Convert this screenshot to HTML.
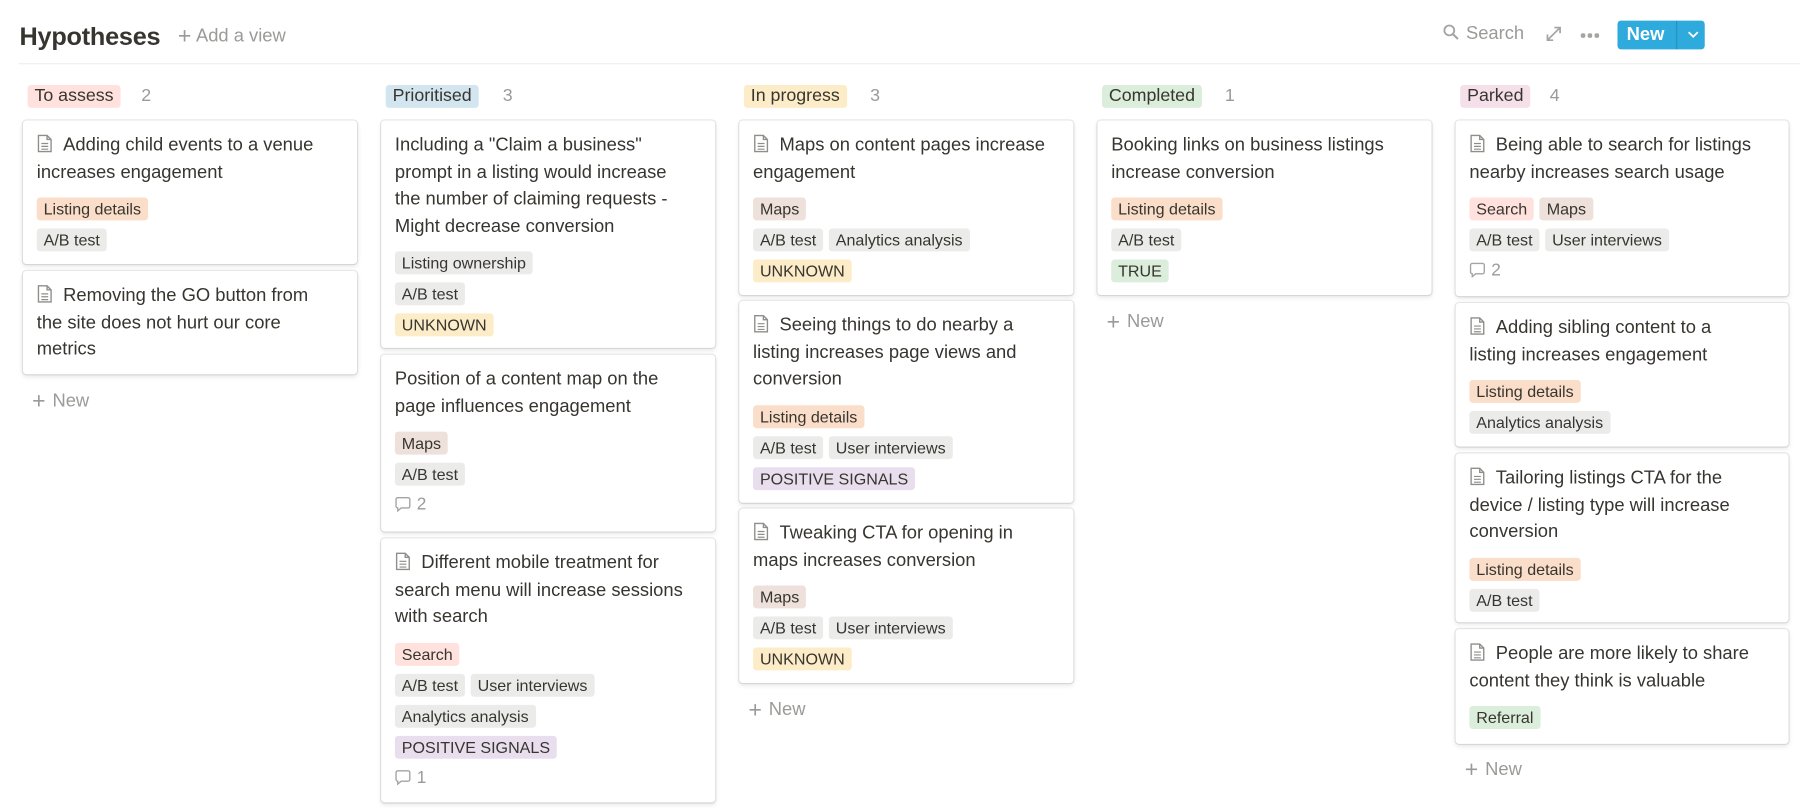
<!DOCTYPE html>
<html><head><meta charset="utf-8"><style>
html,body{margin:0;padding:0;background:#fff;width:1800px;height:810px;overflow:hidden}
#root{position:absolute;left:0;top:0;width:1568px;height:706px;transform:scale(1.14796);transform-origin:0 0;font-family:"Liberation Sans",Arial,sans-serif;color:#37352f}
.title{position:absolute;left:17px;top:19px;font-size:22px;font-weight:bold;letter-spacing:-0.2px}
.addview{position:absolute;left:155px;top:21px;font-size:16px;color:#9b9a97}
.hr{position:absolute;left:16px;right:0;top:55px;height:1px;background:#ededec}
.search{position:absolute;left:1257px;top:21px;font-size:16px;color:#9b9a97}
.btn{position:absolute;left:1409px;top:18px;width:76px;height:25px;background:#2eaadc;border-radius:3px;color:#fff;font-weight:bold;font-size:16px}
.col{position:absolute;top:0;width:291px}
.hdr{position:absolute;top:74px;height:20px;line-height:20px;font-size:15.5px;padding:0 6px;border-radius:3px;white-space:nowrap}
.cnt{position:absolute;top:74px;line-height:20px;font-size:15.5px;color:#9b9a97}
.card{position:absolute;left:0;width:291px;box-sizing:border-box;border-radius:3px;background:#fff;box-shadow:0 0 0 1px rgba(15,15,15,.1),0 2px 4px rgba(15,15,15,.1);padding:10px 12px 0 12px}
.t{font-size:16px;line-height:23.5px;color:#37352f;white-space:nowrap}
.tags{margin-top:10px}
.row{height:20px;margin-bottom:7px;white-space:nowrap}
.tag{display:inline-block;height:20px;line-height:20px;font-size:14px;padding:0 6px;border-radius:3px;margin-right:5px;vertical-align:top}
.g{background:#ebebea}.o{background:#fadec9}.r{background:#ffe2dd}.b{background:#eee0da}.y{background:#fdecc8}.p{background:#e8deee}.gr{background:#dbeddb}.bl{background:#d3e5ef}.pk{background:#f5e0e9}
.cm{font-size:15px;color:#9b9a97;height:20px;line-height:20px;margin-top:4px}
.new{position:absolute;font-size:16px;color:#9b9a97;left:8px}
.doc{display:inline-block;width:14px;height:16px;vertical-align:-2px;margin-right:9px}
</style></head><body><div id="root">
<div class="title">Hypotheses</div>
<div class="addview"><span style="font-size:20px;vertical-align:-2px;margin-right:4px">+</span>Add a view</div>
<div class="search"><svg width="14" height="14" viewBox="0 0 14 14" style="vertical-align:-1px;margin-right:6px"><circle cx="5.5" cy="5.5" r="4.3" fill="none" stroke="#a5a4a1" stroke-width="1.6"/><path d="M8.6 8.6L13 13" stroke="#a5a4a1" stroke-width="1.8"/></svg>Search</div>
<svg style="position:absolute;left:1347px;top:23px" width="13" height="13" viewBox="0 0 13 13"><path d="M1 12L12 1M7 1h5v5M1 7v5h5" fill="none" stroke="#a5a4a1" stroke-width="1.5"/></svg>
<div style="position:absolute;left:1377px;top:29px;width:16px;height:4px"><span style="position:absolute;left:0;width:3.5px;height:3.5px;border-radius:50%;background:#a5a4a1"></span><span style="position:absolute;left:6px;width:3.5px;height:3.5px;border-radius:50%;background:#a5a4a1"></span><span style="position:absolute;left:12px;width:3.5px;height:3.5px;border-radius:50%;background:#a5a4a1"></span></div>
<div class="btn"><span style="position:absolute;left:8px;top:4px">New</span><span style="position:absolute;left:51px;top:0;width:1px;height:25px;background:rgba(0,0,0,.15)"></span><svg style="position:absolute;left:61px;top:9px" width="10" height="7" viewBox="0 0 10 7"><path d="M1 1l4 4 4-4" fill="none" stroke="#fff" stroke-width="1.6"/></svg></div>
<div class="hr"></div>

<svg width="0" height="0" style="position:absolute"><defs><symbol id="d" viewBox="0 0 14 16"><path d="M1.5 1h7.5l3.5 3.5v10.5h-11z" fill="#fff" stroke="#8f8e8b" stroke-width="1.2"/><path d="M9 1v3.5h3.5" fill="none" stroke="#8f8e8b" stroke-width="1.2"/><path d="M4 8h6M4 10.5h6M4 13h6" stroke="#8f8e8b" stroke-width="1"/></symbol><symbol id="c" viewBox="0 0 14 14"><path d="M2.5 1.5h9a1.5 1.5 0 0 1 1.5 1.5v6a1.5 1.5 0 0 1-1.5 1.5h-6l-3 2.5v-2.5a1.5 1.5 0 0 1-1.5-1.5v-6a1.5 1.5 0 0 1 1.5-1.5z" fill="none" stroke="#a5a4a1" stroke-width="1.2"/></symbol></defs></svg>

<!-- col1 -->
<div class="col" style="left:20px">
<div class="hdr r" style="left:4px">To assess</div><div class="cnt" style="left:103px">2</div>
<div class="card" style="top:105px;height:125px"><div class="t"><svg class="doc"><use href="#d"/></svg>Adding child events to a venue<br>increases engagement</div><div class="tags"><div class="row"><span class="tag o">Listing details</span></div><div class="row"><span class="tag g">A/B test</span></div></div></div>
<div class="card" style="top:236px;height:90px"><div class="t"><svg class="doc"><use href="#d"/></svg>Removing the GO button from<br>the site does not hurt our core<br>metrics</div></div>
<div class="new" style="top:339px"><span style="font-size:20px;vertical-align:-2px;margin-right:6px">+</span>New</div>
</div>

<!-- col2 -->
<div class="col" style="left:332px">
<div class="hdr bl" style="left:4px">Prioritised</div><div class="cnt" style="left:106px">3</div>
<div class="card" style="top:105px;height:198px"><div class="t">Including a "Claim a business"<br>prompt in a listing would increase<br>the number of claiming requests -<br>Might decrease conversion</div><div class="tags"><div class="row"><span class="tag g">Listing ownership</span></div><div class="row"><span class="tag g">A/B test</span></div><div class="row"><span class="tag y">UNKNOWN</span></div></div></div>
<div class="card" style="top:309px;height:154px"><div class="t">Position of a content map on the<br>page influences engagement</div><div class="tags"><div class="row"><span class="tag b">Maps</span></div><div class="row"><span class="tag g">A/B test</span></div></div><div class="cm"><svg width="14" height="14" style="vertical-align:-2px;margin-right:5px"><use href="#c"/></svg>2</div></div>
<div class="card" style="top:469px;height:230px"><div class="t"><svg class="doc"><use href="#d"/></svg>Different mobile treatment for<br>search menu will increase sessions<br>with search</div><div class="tags"><div class="row"><span class="tag r">Search</span></div><div class="row"><span class="tag g">A/B test</span><span class="tag g">User interviews</span></div><div class="row"><span class="tag g">Analytics analysis</span></div><div class="row"><span class="tag p">POSITIVE SIGNALS</span></div></div><div class="cm"><svg width="14" height="14" style="vertical-align:-2px;margin-right:5px"><use href="#c"/></svg>1</div></div>
</div>

<!-- col3 -->
<div class="col" style="left:644px">
<div class="hdr y" style="left:4px">In progress</div><div class="cnt" style="left:114px">3</div>
<div class="card" style="top:105px;height:152px"><div class="t"><svg class="doc"><use href="#d"/></svg>Maps on content pages increase<br>engagement</div><div class="tags"><div class="row"><span class="tag b">Maps</span></div><div class="row"><span class="tag g">A/B test</span><span class="tag g">Analytics analysis</span></div><div class="row"><span class="tag y">UNKNOWN</span></div></div></div>
<div class="card" style="top:262px;height:176px"><div class="t"><svg class="doc"><use href="#d"/></svg>Seeing things to do nearby a<br>listing increases page views and<br>conversion</div><div class="tags"><div class="row"><span class="tag o">Listing details</span></div><div class="row"><span class="tag g">A/B test</span><span class="tag g">User interviews</span></div><div class="row"><span class="tag p">POSITIVE SIGNALS</span></div></div></div>
<div class="card" style="top:443px;height:152px"><div class="t"><svg class="doc"><use href="#d"/></svg>Tweaking CTA for opening in<br>maps increases conversion</div><div class="tags"><div class="row"><span class="tag b">Maps</span></div><div class="row"><span class="tag g">A/B test</span><span class="tag g">User interviews</span></div><div class="row"><span class="tag y">UNKNOWN</span></div></div></div>
<div class="new" style="top:608px"><span style="font-size:20px;vertical-align:-2px;margin-right:6px">+</span>New</div>
</div>

<!-- col4 -->
<div class="col" style="left:956px">
<div class="hdr gr" style="left:4px">Completed</div><div class="cnt" style="left:111px">1</div>
<div class="card" style="top:105px;height:152px"><div class="t">Booking links on business listings<br>increase conversion</div><div class="tags"><div class="row"><span class="tag o">Listing details</span></div><div class="row"><span class="tag g">A/B test</span></div><div class="row"><span class="tag gr">TRUE</span></div></div></div>
<div class="new" style="top:270px"><span style="font-size:20px;vertical-align:-2px;margin-right:6px">+</span>New</div>
</div>

<!-- col5 -->
<div class="col" style="left:1268px">
<div class="hdr pk" style="left:4px">Parked</div><div class="cnt" style="left:82px">4</div>
<div class="card" style="top:105px;height:153px;width:290px"><div class="t"><svg class="doc"><use href="#d"/></svg>Being able to search for listings<br>nearby increases search usage</div><div class="tags"><div class="row"><span class="tag r">Search</span><span class="tag b">Maps</span></div><div class="row"><span class="tag g">A/B test</span><span class="tag g">User interviews</span></div></div><div class="cm"><svg width="14" height="14" style="vertical-align:-2px;margin-right:5px"><use href="#c"/></svg>2</div></div>
<div class="card" style="top:264px;height:125px;width:290px"><div class="t"><svg class="doc"><use href="#d"/></svg>Adding sibling content to a<br>listing increases engagement</div><div class="tags"><div class="row"><span class="tag o">Listing details</span></div><div class="row"><span class="tag g">Analytics analysis</span></div></div></div>
<div class="card" style="top:395px;height:147px;width:290px"><div class="t"><svg class="doc"><use href="#d"/></svg>Tailoring listings CTA for the<br>device / listing type will increase<br>conversion</div><div class="tags"><div class="row"><span class="tag o">Listing details</span></div><div class="row"><span class="tag g">A/B test</span></div></div></div>
<div class="card" style="top:548px;height:100px;width:290px"><div class="t"><svg class="doc"><use href="#d"/></svg>People are more likely to share<br>content they think is valuable</div><div class="tags"><div class="row"><span class="tag gr">Referral</span></div></div></div>
<div class="new" style="top:660px"><span style="font-size:20px;vertical-align:-2px;margin-right:6px">+</span>New</div>
</div>
</div></body></html>
